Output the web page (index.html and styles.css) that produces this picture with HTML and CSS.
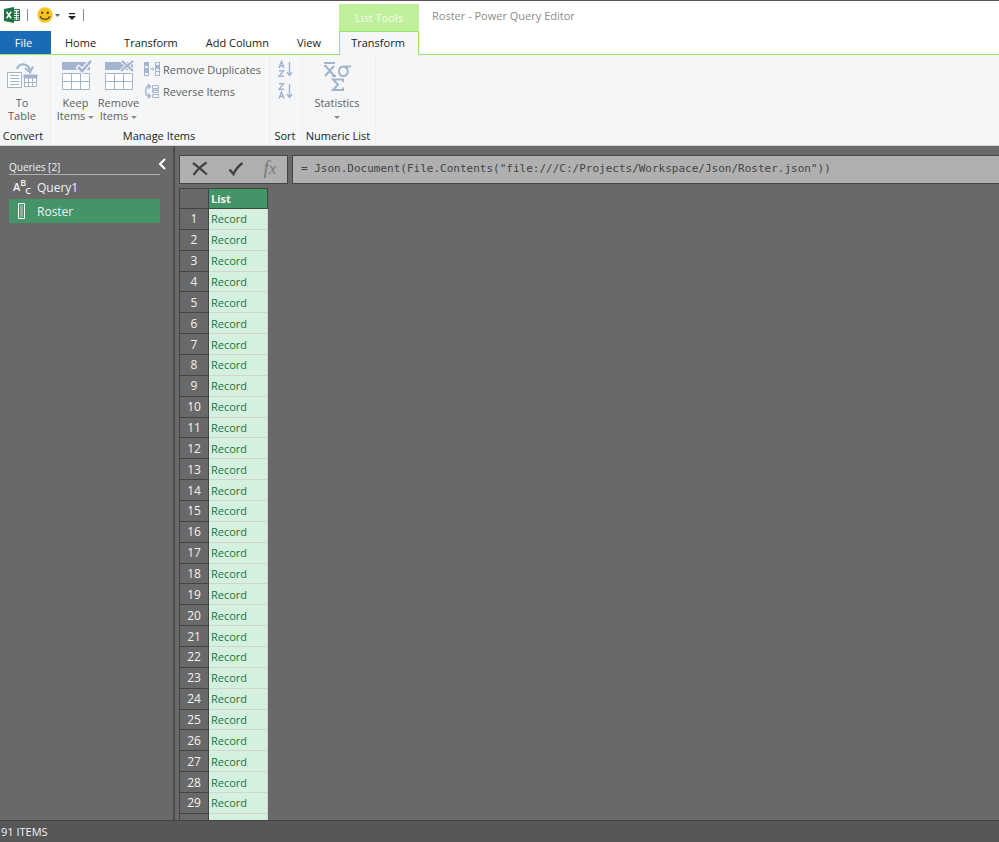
FILE: index.html
```html
<!DOCTYPE html>
<html lang="en">
<head>
<meta charset="utf-8">
<title>Roster - Power Query Editor</title>
<link rel="stylesheet" href="styles.css">
</head>
<body>
<div class="window">
  <header class="top">
    <div class="left-top">
      <div class="quick">
        <svg class="excel" width="17" height="16" viewBox="0 0 17 16" aria-hidden="true"><path fill="#fff" stroke="#217346" d="M8.500 2.500h7v11h-7z"/><path stroke="#217346" stroke-width="1.300" d="M10 5h2M13 5h2M10 7.300h2M13 7.300h2M10 9.600h2M13 9.600h2M10 11.800h2M13 11.800h2"/><path fill="#217346" d="M0 2 10 0v16L0 14z"/><path stroke="#fff" stroke-width="1.600" d="M2.600 4.800l4.600 6.600M7.200 4.600l-4.600 6.600"/></svg>
        <span class="bar"></span>
        <button class="smile" aria-label="Send a smile">
          <svg width="16" height="16" viewBox="0 0 16 16"><circle cx="8" cy="8" r="7.700" fill="#fbc619"/><circle cx="5.200" cy="5.800" r="1.200" fill="#4d4a35"/><circle cx="10.800" cy="5.800" r="1.200" fill="#4d4a35"/><path d="M3.200 9.200c1.400 4 8.200 4 9.600 0" fill="none" stroke="#4d4a35" stroke-width="1.300"/></svg>
          <svg width="5" height="3" viewBox="0 0 5 3"><path d="M0 0h5L2.500 3z" fill="#4b6b5c"/></svg>
        </button>
        <button class="custom" aria-label="Customize toolbar"><svg width="8" height="7" viewBox="0 0 8 7"><path d="M1 0h6v1.300H1zM0 3h8L4 7z" fill="#222"/></svg></button>
        <span class="bar"></span>
      </div>
      <nav class="tabs">
        <button class="file">File</button>
        <button class="tab">Home</button>
        <button class="tab">Transform</button>
        <button class="tab">Add Column</button>
        <button class="tab">View</button>
      </nav>
    </div>
    <div class="context">
      <div class="context-title">List Tools</div>
      <button class="context-tab">Transform</button>
    </div>
    <div class="right-top"><h1>Roster - Power Query Editor</h1></div>
  </header>

  <div class="ribbon">
    <section class="group convert">
      <div class="tools">
        <button class="big">
          <svg width="32" height="32" viewBox="0 0 32 32" fill="none" stroke="#a3b4cf"><path fill="#fff" d="M1.500 12.500h14v15h-14z"/><path d="M4 15.500h9M4 18.500h9M4 21.500h9M4 24.500h9"/><path fill="#fff" d="M18.500 15.500h12v11h-12z"/><path fill="#a3b4cf" d="M18 15h13v3H18z"/><path d="M22.500 18v8M26.500 18v8M18 22.500h12"/><path stroke-width="2.200" d="M11 9c2-7 13-6 13 3"/><path stroke-width="2" d="M19 8l5 4.500 3-6"/></svg>
          <span>To<br>Table</span>
        </button>
      </div>
      <h2>Convert</h2>
    </section>
    <section class="group manage">
      <div class="tools">
        <button class="big">
          <svg width="32" height="32" viewBox="0 0 32 32" fill="none"><path fill="#a3b4cf" d="M2 2h28v8H2z"/><path fill="#fff" stroke="#a3b4cf" d="M2.500 13.500h27v16h-27z"/><path stroke="#a3b4cf" d="M11.500 13v16M20.500 13v16M2 21.500h27"/><path stroke="#f5f6f7" stroke-width="5" d="M17 6l5 5 9-10"/><path stroke="#a3b4cf" stroke-width="2.600" d="M18 7l4 4 9-10"/></svg>
          <span>Keep<br>Items <i class="caret"></i></span>
        </button>
        <button class="big">
          <svg width="32" height="32" viewBox="0 0 32 32" fill="none"><path fill="#a3b4cf" d="M2 2h28v8H2z"/><path fill="#fff" stroke="#a3b4cf" d="M2.500 13.500h27v16h-27z"/><path stroke="#a3b4cf" d="M11.500 13v16M20.500 13v16M2 21.500h27"/><path stroke="#f5f6f7" stroke-width="4" d="M19 1l11 10M30 1L18 11"/><path stroke="#a3b4cf" stroke-width="2.200" d="M19 1l11 10M30 1L18 11"/></svg>
          <span>Remove<br>Items <i class="caret"></i></span>
        </button>
        <div class="stack">
          <button class="small">
            <svg width="16" height="16" viewBox="0 0 16 16" fill="none" stroke="#a3b4cf"><path fill="#a3b4cf" d="M.500 1.500h4v3h-4zM.500 7.500h4v3h-4zM11.500 4.500h4v3h-4z"/><path d="M.500 1.500h4v13h-4zM11.500 1.500h4v13h-4zM11.500 10.500h4M.500 11.500h4M6 8h4M8.500 6.500L10 8 8.500 9.500"/></svg>
            Remove Duplicates
          </button>
          <button class="small">
            <svg width="16" height="16" viewBox="0 0 16 16" fill="none" stroke="#a3b4cf"><path d="M8.500 2.500h6v3h-6zM8.500 7.500h6v2h-6zM8.500 11.500h6v3h-6zM8 7h7"/><path stroke-width="1.400" d="M6 3.500H4c-3 0-3 9.500 0 9.500h2M4 1l2.300 2.500L4 6M4 10.500L6.300 13 4 15.500"/></svg>
            Reverse Items
          </button>
        </div>
      </div>
      <h2>Manage Items</h2>
    </section>
    <section class="group sort">
      <div class="tools stack">
        <button class="small" aria-label="Sort ascending"><svg width="16" height="18" viewBox="0 0 16 18" fill="none" stroke="#a3b4cf" stroke-width="1.400"><path d="M1 8l2.500-6.500L6 8M2 6h3M1 10.700h4.500L1 16.300h5M11.500 2v13M9 12.300l2.500 3 2.500-3"/></svg></button>
        <button class="small" aria-label="Sort descending"><svg width="16" height="18" viewBox="0 0 16 18" fill="none" stroke="#a3b4cf" stroke-width="1.400"><path d="M1 1.700h4.500L1 7.300h5M1 16.500L3.500 10 6 16.500M2 14.500h3M11.500 2v13M9 12.300l2.500 3 2.500-3"/></svg></button>
      </div>
      <h2>Sort</h2>
    </section>
    <section class="group numeric">
      <div class="tools">
        <button class="big">
          <svg width="32" height="32" viewBox="0 0 32 32" fill="none" stroke="#a3b4cf" stroke-width="2"><path d="M3 3h11M4.500 6l9 10M13 6L4 16M3 6h3M11 16h4M30 6.500h-7c-7 0-6 9.500-1 9.500 6 0 6-8 1.500-9"/><path d="M22 22v-2.500H12l5 5-5 5.500h10v-2.500"/></svg>
          <span>Statistics<br><i class="caret"></i></span>
        </button>
      </div>
      <h2>Numeric List</h2>
    </section>
  </div>

  <div class="body">
    <aside class="queries">
      <div class="q-head"><h2>Queries [2]</h2><button aria-label="Collapse pane"><svg width="8" height="12" viewBox="0 0 8 12"><path d="M7 1L2 6l5 5" fill="none" stroke="#fff" stroke-width="2"/></svg></button></div>
      <button class="query"><span class="abc" aria-hidden="true">A<sup>B</sup><sub>C</sub></span>Query1</button>
      <button class="query selected"><svg width="16" height="18" viewBox="0 0 16 18"><path d="M5.500 1.500h6v15h-6z" fill="#439467" stroke="#fff"/><path d="M7 4h3M7 6h3M7 8h3M7 10h3M7 12h3M7 14h3" stroke="#b9dcc8"/></svg>Roster</button>
    </aside>
    <main class="work">
      <div class="formula">
        <div class="f-tools">
          <button aria-label="Cancel"><svg width="16" height="16" viewBox="0 0 16 16"><path d="M1 2c4 3 9 7 14 11.500M14.500 1.500C9 5 5 9 1.500 14" fill="none" stroke="#444" stroke-width="2.200"/></svg></button>
          <button aria-label="Accept"><svg width="16" height="16" viewBox="0 0 16 16"><path d="M1.500 8.500l4 4.500c2-4.500 5-8 9-11" fill="none" stroke="#444" stroke-width="2.600"/></svg></button>
          <button class="fx" aria-label="Insert step"><span>f</span><small>x</small></button>
        </div>
        <input type="text" aria-label="Formula" value="= Json.Document(File.Contents(&quot;file:///C:/Projects/Workspace/Json/Roster.json&quot;))">
      </div>
      <div class="grid">
        <table>
          <thead><tr><th></th><th class="col" scope="col">List</th></tr></thead>
          <tbody>
            <tr><th>1</th><td>Record</td></tr><tr><th>2</th><td>Record</td></tr>
            <tr><th>3</th><td>Record</td></tr><tr><th>4</th><td>Record</td></tr>
            <tr><th>5</th><td>Record</td></tr><tr><th>6</th><td>Record</td></tr>
            <tr><th>7</th><td>Record</td></tr><tr><th>8</th><td>Record</td></tr>
            <tr><th>9</th><td>Record</td></tr><tr><th>10</th><td>Record</td></tr>
            <tr><th>11</th><td>Record</td></tr><tr><th>12</th><td>Record</td></tr>
            <tr><th>13</th><td>Record</td></tr><tr><th>14</th><td>Record</td></tr>
            <tr><th>15</th><td>Record</td></tr><tr><th>16</th><td>Record</td></tr>
            <tr><th>17</th><td>Record</td></tr><tr><th>18</th><td>Record</td></tr>
            <tr><th>19</th><td>Record</td></tr><tr><th>20</th><td>Record</td></tr>
            <tr><th>21</th><td>Record</td></tr><tr><th>22</th><td>Record</td></tr>
            <tr><th>23</th><td>Record</td></tr><tr><th>24</th><td>Record</td></tr>
            <tr><th>25</th><td>Record</td></tr><tr><th>26</th><td>Record</td></tr>
            <tr><th>27</th><td>Record</td></tr><tr><th>28</th><td>Record</td></tr>
            <tr><th>29</th><td>Record</td></tr><tr><th>&nbsp;</th><td>&nbsp;</td></tr>
          </tbody>
        </table>
      </div>
    </main>
  </div>
  <footer>91 ITEMS</footer>
</div>
</body>
</html>
```
FILE: styles.css
```css
* { box-sizing: border-box; }
body { margin: 0; font: 11px/13px "Open Sans", "Noto Sans", sans-serif; color: #222; background: #696969; }
button { font: inherit; color: inherit; background: none; border: 0; padding: 0; margin: 0; }
h1, h2 { font: inherit; margin: 0; }
svg { display: block; flex: none; }
.window { display: flex; flex-direction: column; height: 100vh; overflow: hidden; }

/* title bar and tabs */
.top { display: flex; flex: none; height: 55px; background: #fff; border-top: 1px solid #57535a; }
.left-top { display: flex; flex-direction: column; width: 339px; border-bottom: 1px solid #97e468; }
.quick { display: flex; align-items: center; height: 30px; padding: 0 0 2px 4px; }
.bar { width: 1px; height: 12px; background: #8a8a8a; }
.excel + .bar { margin: 0 9px 0 6px; }
.smile { display: flex; align-items: center; gap: 2px; }
.custom { margin: 3px 7px 0 8px; }
.tabs { display: flex; flex: 1; }
.file { width: 51px; background: #1a6ab5; color: #fff; padding-right: 4px; }
.tab { padding: 0 14px; color: #222; }
.context { display: flex; flex-direction: column; width: 80px; padding-top: 3px; }
.context-title { height: 27px; line-height: 27px; text-align: center; background: #c0f09b; color: #f4fdec; }
.context-tab { flex: 1; padding: 0 2px 2px 0; background: #f5f6f7; border: solid #97e468; border-width: 1px 1px 0; }
.right-top { flex: 1; padding: 8px 13px; color: #8c8c8c; border-bottom: 1px solid #97e468; }

/* ribbon */
.ribbon { display: flex; flex: none; height: 91px; background: #f5f6f7; border-bottom: 1px solid #d5d8d8; }
.group { display: flex; flex-direction: column; justify-content: space-between; border-right: 1px solid #eceef0; padding: 5px 0 3px; color: #5f5f5f; }
.group h2 { padding-right: 2px; color: #222; text-align: center; white-space: nowrap; }
.convert { width: 51px; }
.convert h2 { padding-right: 4px; }
.manage { width: 219px; }
.sort { width: 33px; }
.numeric { width: 73px; }
.tools { display: flex; }
.big { display: flex; flex-direction: column; align-items: center; width: 44px; gap: 4px; }
.manage .big { width: 43px; }
.manage .tools { padding-left: 3px; }
.numeric .big { width: 68px; }
.stack { display: flex; flex-direction: column; gap: 4px; }
.manage .stack { padding-left: 4px; }
.small { display: flex; align-items: center; gap: 3px; height: 18px; white-space: nowrap; }
.sort .small { padding-left: 8px; }
.caret { display: inline-block; border: solid transparent; border-width: 3px 3px 0; border-top-color: #8c8c8c; vertical-align: middle; }

/* queries pane */
.body { display: flex; flex: 1; min-height: 0; }
.queries { width: 175px; padding: 12px 13px 0 9px; border-right: 2px solid #4c4c4c; color: #f2f2f2; }
.q-head { display: flex; justify-content: space-between; height: 17px; border-bottom: 1px solid #b0b0b0; }
.q-head h2 { padding-top: 3px; font-size: 10px; }
.q-head button { height: 12px; margin-right: -6px; }
.query { display: flex; align-items: center; gap: 8px; width: 100%; height: 24px; padding-left: 4px; font-size: 12px; }
.selected { background: #439467; }
.abc { width: 17px; margin-right: -1px; font-size: 11px; line-height: 16px; font-weight: 600; white-space: nowrap; }
.abc sup, .abc sub { font-size: 9px; line-height: 0; }
.abc sub { margin-left: -1px; }

/* formula bar and preview */
.work { display: flex; flex-direction: column; flex: 1; min-width: 0; padding: 9px 0 0 4px; }
.formula { display: flex; flex: none; gap: 4px; height: 29px; }
.f-tools { display: flex; align-items: center; justify-content: space-between; width: 109px; padding: 0 11px 2px 12px; background: #b0b0b0; border: 1px solid #444; }
.fx { color: #777; font: italic 19px/20px "Liberation Serif", serif; }
.fx small { font-size: 16px; }
.formula input { flex: 1; min-width: 0; padding: 0 8px 2px; background: #b0b0b0; border: 1px solid #444; border-right: 0; font: 11px "DejaVu Sans Mono", monospace; color: #444; }
.grid { flex: 1; min-height: 0; margin-top: 4px; overflow: hidden; }
table { width: 89px; height: 647px; border-collapse: separate; border-spacing: 0; table-layout: fixed; border-left: 1px solid #444; }
thead tr { height: 21px; }
th, td { padding: 0; line-height: 13px; }
th { width: 29px; border: solid #444; border-width: 0 1px 1px 0; font-weight: 400; font-size: 12px; color: #f2f2f2; }
thead th { border-top: 1px solid #444; }
.col { width: 59px; text-align: left; padding-left: 2px; background: #439467; font-size: 11px; font-weight: 700; }
td { padding-left: 2px; background: #d4f0df; color: #217346; border-bottom: 1px solid #d3d3d3; border-right: 1px solid #d3d3d3; }
footer { flex: none; height: 22px; padding: 0 1px; line-height: 22px; background: #575757; border-top: 1px solid #444; color: #f2f2f2; font-size: 11px; }
```
